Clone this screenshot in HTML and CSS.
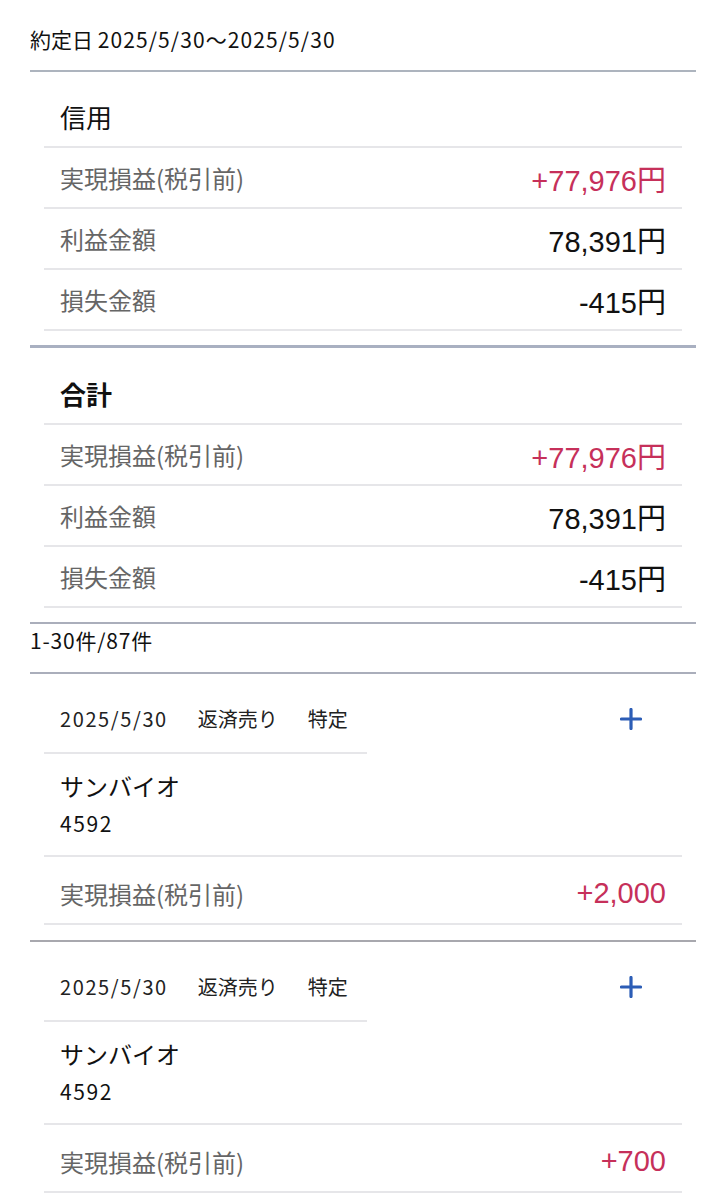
FILE: index.html
```html
<!DOCTYPE html>
<html lang="ja">
<head>
    <meta charset="utf-8">
    <title>実現損益</title>
    <link rel="stylesheet" href="styles.css">
</head>
<body>

<div class="page">
    <div class="period">約定日 <span class="num">2025/5/30〜2025/5/30</span></div>

    <section class="summary">
        <h2 class="summary-title">信用</h2>
        <div class="row">
            <span class="label">実現損益(税引前)</span>
            <span class="value plus">+77,976円</span>
        </div>
        <div class="row">
            <span class="label">利益金額</span>
            <span class="value">78,391円</span>
        </div>
        <div class="row">
            <span class="label">損失金額</span>
            <span class="value">-415円</span>
        </div>
    </section>

    <section class="summary summary-total">
        <h2 class="summary-title bold">合計</h2>
        <div class="row">
            <span class="label">実現損益(税引前)</span>
            <span class="value plus">+77,976円</span>
        </div>
        <div class="row">
            <span class="label">利益金額</span>
            <span class="value">78,391円</span>
        </div>
        <div class="row">
            <span class="label">損失金額</span>
            <span class="value">-415円</span>
        </div>
    </section>

    <div class="count">1-30件/87件</div>

    <article class="trade">
        <div class="trade-head">
            <div class="trade-meta">
                <span class="num">2025/5/30</span>
                <span>返済売り</span>
                <span>特定</span>
            </div>
            <button class="expand" type="button" aria-label="開く">
                <svg viewBox="0 0 22 22" width="22" height="22">
                    <path d="M11 1.5v19M1.5 11h19" fill="none" stroke="currentColor" stroke-width="3.2" stroke-linecap="round"/>
                </svg>
            </button>
        </div>
        <div class="trade-name">
            <div class="name">サンバイオ</div>
            <div class="code">4592</div>
        </div>
        <div class="row trade-row">
            <span class="label">実現損益(税引前)</span>
            <span class="value plus">+2,000</span>
        </div>
    </article>

    <article class="trade">
        <div class="trade-head">
            <div class="trade-meta">
                <span class="num">2025/5/30</span>
                <span>返済売り</span>
                <span>特定</span>
            </div>
            <button class="expand" type="button" aria-label="開く">
                <svg viewBox="0 0 22 22" width="22" height="22">
                    <path d="M11 1.5v19M1.5 11h19" fill="none" stroke="currentColor" stroke-width="3.2" stroke-linecap="round"/>
                </svg>
            </button>
        </div>
        <div class="trade-name">
            <div class="name">サンバイオ</div>
            <div class="code">4592</div>
        </div>
        <div class="row trade-row">
            <span class="label">実現損益(税引前)</span>
            <span class="value plus">+700</span>
        </div>
    </article>
</div>

</body>
</html>
```

FILE: styles.css
```css
body {
    margin: 0;
    background: #fff;
    color: #111;
    font-family: "Noto Sans CJK JP", "Noto Sans", sans-serif;
}

.page {
    padding: 0 30px;
}

.period {
    padding: 24px 0 16px;
    font-size: 21px;
    line-height: 30px;
    border-bottom: 2px solid #adb4be;
}

.period .num {
    letter-spacing: 1.1px;
}

.summary {
    padding: 0 14px;
    margin-bottom: 14px;
}

.summary-total {
    border-top: 3px solid #a9b0c1;
}

.summary-title {
    margin: 0;
    padding: 30px 16px 14px;
    font-size: 26px;
    line-height: 30px;
    font-weight: 400;
}

.summary-total .summary-title {
    padding-top: 31px;
}

.bold {
    font-weight: 700;
}

.row {
    display: flex;
    justify-content: space-between;
    align-items: center;
    padding: 0 16px;
    height: 59px;
    border-top: 2px solid #e6e6e9;
}

.row:last-child {
    border-bottom: 2px solid #e6e6e9;
}

.label {
    font-size: 24px;
    color: #666;
}

.value {
    font-family: "Liberation Sans", "Noto Sans CJK JP", sans-serif;
    font-size: 29px;
    color: #111;
}

.value.plus {
    color: #c6305a;
}

.count {
    border-top: 2px solid #aaaebb;
    border-bottom: 2px solid #aaaebb;
    padding: 1px 0 17px;
    font-size: 21px;
    line-height: 30px;
    letter-spacing: 0.8px;
}

.trade {
    padding: 0 14px 15px;
    border-bottom: 2px solid #a8a8ae;
}

.trade-head {
    display: flex;
}

.trade-meta {
    display: flex;
    gap: 30px;
    width: 323px;
    box-sizing: border-box;
    padding: 30px 16px 18px;
    font-size: 20px;
    line-height: 30px;
    color: #222;
    border-bottom: 2px solid #e6e6e9;
}

.trade-meta .num {
    letter-spacing: 1.6px;
}

.expand {
    margin: 34px 40px 0 auto;
    padding: 0;
    width: 22px;
    height: 22px;
    border: 0;
    background: none;
    color: #2c5db6;
}

.expand svg {
    display: block;
}

.trade-name {
    padding: 15px 16px 12px;
}

.name {
    font-size: 24px;
    line-height: 34px;
}

.code {
    font-size: 21px;
    line-height: 40px;
    letter-spacing: 1.6px;
}

.trade .trade-row {
    height: 70px;
    box-sizing: border-box;
    padding-top: 6px;
}
```
